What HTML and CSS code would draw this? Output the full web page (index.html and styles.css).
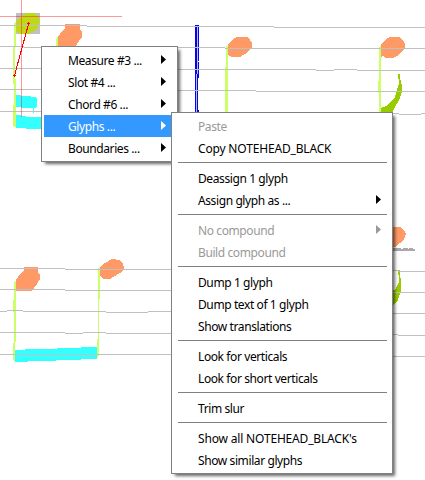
FILE: index.html
```
<!DOCTYPE html>
<html lang="en">
<head>
<meta charset="utf-8">
<title>Score sheet</title>
<link rel="stylesheet" href="styles.css">
</head>
<body>
<main class="sheet">
<svg class="score" width="425" height="480" viewBox="0 0 425 480" shape-rendering="crispEdges">
  <rect x="16" y="13" width="24" height="21" fill="#c0c0c0"/>
  <path class="stem" d="M14 24l2-3v25h-1v33h1v48h-2l-1-2v-20h1v-21h-1V46h1zM57 37l2-1v11h-3v-6z"/>
  <path fill="#bfd919" d="M16 21l4-4 7-4h7l4 3 2 5-1 5-5 5-5 3h-8l-5-3z"/>
  <path class="head" d="M65 24h15v5l2 3v5l-3 4-3 5-8 3H58V37l4-6 3-3z"/>
  <path class="beam" d="M16 95l10 1 10 1 1 2v7l-1 2h-2v5h-1v-5h-7l-10-1zM16 115l10 1v1h20v12H26v-1H16z"/>
  <path fill="#0000ff" d="M195 25h4v89h-4z"/>
  <path fill="#c0c0c0" d="M197 27h1v47h-1zM196 74h1v40h-1z"/>
  <path fill="#fff" d="M198 61h1v1h-1zM198 78h1v32h-1z"/>
  <path class="stem" d="M226 46h2v66h-3V67h1zM379 47l2-1v66h-2V93h-1V81h1z"/>
  <path class="head" d="M228 44l4-4 5-3h10l3 3 2 3v4l-3 3-4 4-5 3h-8l-4-2zM381 44l4-4 5-3h9l4 3 2 4v4l-3 4-5 4-4 2h-8l-2-2-2 1z"/>
  <path class="slur" d="M398 74h2v4l2 8v6l-3 8-4 7-3 6h-11v-5l5-2 5-5 4-4 2-7 2-6V79h-1z"/>
  <path class="head" d="M24 267h14v5l2 3v4l-3 5-3 4-2 3H16V280l4-6 4-3zM100 267l5-4 7-4 7 1 4 3 1 6-4 4-5 3-5 3h-6l-4-3z"/>
  <path class="stem" d="M14 282l2-2v62h-1v19l-2-1v-17h1v-31h-1v-12h1zM98 268l2-1v32h-1v56l-2 4v-20h1z"/>
  <path class="beam" d="M15 350h10v-1h32v-1h24v-1h16v12H81v1H56v1H28v1H15z"/>
  <path class="head" d="M380 228l15-1h5l4 3 2 4-2 5-4 4-5 4h-15z"/>
  <path fill="#a9a9a9" d="M390 248h11v1h2v-1h5v1h1v-1h4v1h2v2h-25z"/>
  <path class="slur" d="M398 270h2v5l1 5v11l-3 9-4 5h-4v-15h5l4-8v-7h-1z"/>
  <path class="staff" d="M0 25.500H87M87 26.500H274M274 27.500H425M0 46.500H24M24 47.500H225M225 48.500H425M0 68.500H130M130 69.500H316M316 70.500H334M334 69.500H357M357 70.500H425M0 89.500H130M130 90.500H256M256 91.500H425M0 111.500H50M390 113.500H399M399 114.500H421M421 113.500H425"/>
  <path class="staff" d="M0 268.500H65M65 269.500H180M0 289.500H65M65 290.500H180M0 311.500H7M7 310.500H23M23 311.500H106M106 312.500H148M148 311.500H180M0 332.500H65M65 333.500H83M83 332.500H106M106 333.500H180M0 354.500H180M390 270.500H399M399 271.500H425M390 292.500H425M390 313.500H425M390 334.500H398M398 335.500H425M390 356.500H425"/>
  <path fill="#ff0000" fill-opacity=".4" d="M0 16h122v1H0zM21 0h1v117h-1z"/>
  <path class="slope" d="M28.500 24L14.500 75.500M27 23.500h3M28.500 22v3M13 75.500h3M14.500 74v3"/>
</svg>

<ul class="menu menu-root">
  <li class="item"><span>Measure #3 ...</span><i class="arrow"></i></li>
  <li class="item"><span>Slot #4 ...</span><i class="arrow"></i></li>
  <li class="item"><span>Chord #6 ...</span><i class="arrow"></i></li>
  <li class="item selected"><span>Glyphs ...</span><i class="arrow"></i></li>
  <li class="item"><span>Boundaries ...</span><i class="arrow"></i></li>
</ul>

<ul class="menu menu-glyphs">
  <li class="item disabled"><span>Paste</span></li>
  <li class="item caps"><span>Copy NOTEHEAD_BLACK</span></li>
  <li class="separator"></li>
  <li class="item"><span>Deassign 1 glyph</span></li>
  <li class="item"><span>Assign glyph as ...</span><i class="arrow"></i></li>
  <li class="separator"></li>
  <li class="item disabled"><span>No compound</span><i class="arrow"></i></li>
  <li class="item disabled"><span>Build compound</span></li>
  <li class="separator"></li>
  <li class="item"><span>Dump 1 glyph</span></li>
  <li class="item"><span>Dump text of 1 glyph</span></li>
  <li class="item"><span>Show translations</span></li>
  <li class="separator"></li>
  <li class="item"><span>Look for verticals</span></li>
  <li class="item"><span>Look for short verticals</span></li>
  <li class="separator"></li>
  <li class="item"><span>Trim slur</span></li>
  <li class="separator"></li>
  <li class="item caps"><span>Show all NOTEHEAD_BLACK's</span></li>
  <li class="item"><span>Show similar glyphs</span></li>
</ul>
</main>
</body>
</html>
```
FILE: styles.css
```
* { box-sizing: border-box; }
body { margin: 0; background: #fff; overflow: hidden; }
.sheet { position: relative; width: 425px; height: 480px; overflow: hidden; }
.score { display: block; }
.staff { fill: none; stroke: #c0c0c0; }
.stem { fill: #ccff66; }
.head { fill: #ff9966; }
.beam { fill: #33ffff; }
.slur { fill: #99cc00; }
.slope { fill: none; stroke: #ff0000; }

.menu {
  position: absolute;
  margin: 0;
  padding: 2px;
  list-style: none;
  background: #fff;
  border: 1px solid #808080;
  box-shadow: 3px 3px 3px -1px rgba(0, 0, 0, .6);
  font: 12px/22px "Noto Sans", "Open Sans", sans-serif;
  letter-spacing: -.4px;
  color: #000;
}
.menu-root { left: 41px; top: 46px; width: 137px; height: 116px; }
.menu-glyphs { left: 171px; top: 112px; width: 222px; height: 362px; }
.item {
  display: flex;
  align-items: center;
  justify-content: space-between;
  height: 22px;
  padding: 2px 9px 0 24px;
  white-space: nowrap;
}
.caps { letter-spacing: -.17px; }
.selected { background: #3399ff; color: #fff; }
.disabled { color: #999; }
.arrow {
  width: 5px;
  height: 9px;
  margin-top: -3px;
  background: currentColor;
  clip-path: polygon(0 0, 100% 50%, 0 100%);
}
.separator { height: 1px; margin: 3px 3px 4px 4px; background: #808080; }
```
